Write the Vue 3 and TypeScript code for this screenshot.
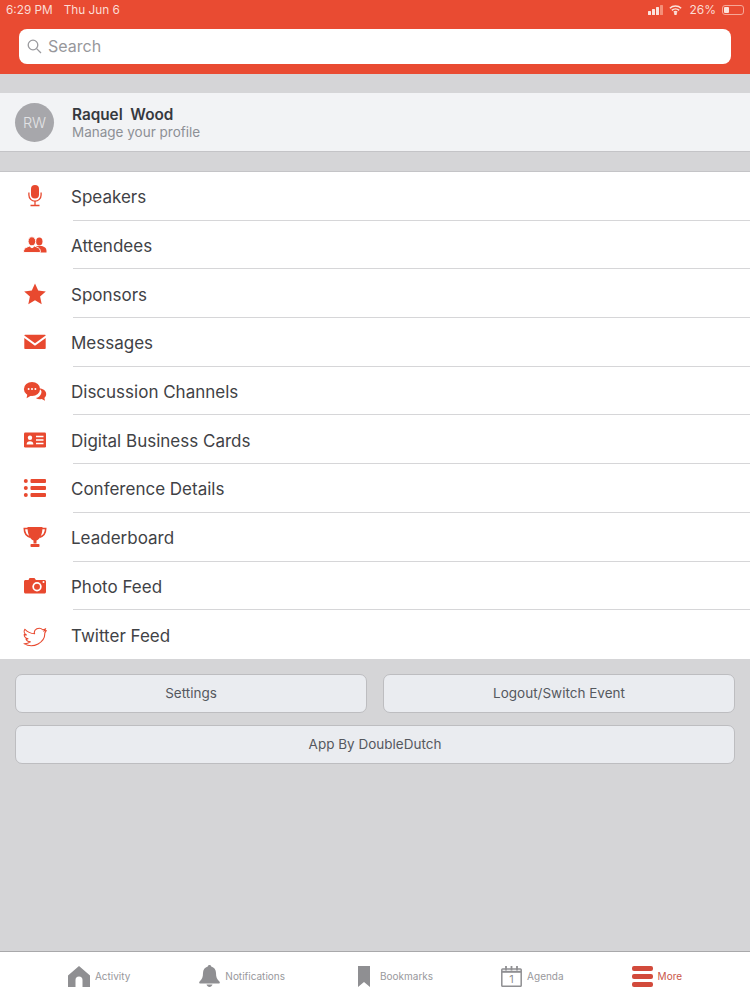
<script setup lang="ts">
const rows = [
  { label: 'Speakers', icon: 'mic' },
  { label: 'Attendees', icon: 'people' },
  { label: 'Sponsors', icon: 'star' },
  { label: 'Messages', icon: 'mail' },
  { label: 'Discussion Channels', icon: 'chat' },
  { label: 'Digital Business Cards', icon: 'card' },
  { label: 'Conference Details', icon: 'list' },
  { label: 'Leaderboard', icon: 'trophy' },
  { label: 'Photo Feed', icon: 'camera' },
  { label: 'Twitter Feed', icon: 'bird' },
]
</script>

<template>
  <div class="page">
    <header class="top">
      <div class="status">
        <span class="time">6:29 PM</span>
        <span class="date">Thu Jun 6</span>
        <span class="status-right">
          <svg class="signal" width="16" height="10" viewBox="0 0 16 10">
            <rect x="0" y="6" width="3" height="4" rx=".5" fill="#fbe3dd" />
            <rect x="4" y="4" width="3" height="6" rx=".5" fill="#fbe3dd" />
            <rect x="8" y="2" width="3" height="8" rx=".5" fill="#fbe3dd" />
            <rect x="12" y="0" width="3" height="10" rx=".5" fill="#f58f78" />
          </svg>
          <svg class="wifi" width="13" height="10" viewBox="0 0 14 11" fill="none" stroke="#fbe3dd" stroke-width="1.7">
            <path d="M.8 3.6a9 9 0 0 1 12.4 0" />
            <path d="M3 5.9a5.8 5.8 0 0 1 8 0" />
            <path d="M5.2 8.1a2.6 2.6 0 0 1 3.6 0" />
            <circle cx="7" cy="9.6" r=".7" fill="#fbe3dd" />
          </svg>
          <span class="pct">26%</span>
          <span class="battery"><i></i></span>
        </span>
      </div>
      <div class="search">
        <svg width="15" height="15" viewBox="0 0 15 15" fill="none" stroke="#9a9a9e" stroke-width="1.3">
          <circle cx="6" cy="6" r="4.8" />
          <path d="M9.6 9.6 14 14" />
        </svg>
        <span class="search-text">Search</span>
      </div>
    </header>

    <section class="profile">
      <div class="avatar">RW</div>
      <div class="who">
        <div class="name">Raquel&nbsp; Wood</div>
        <div class="manage">Manage your profile</div>
      </div>
    </section>

    <ul class="menu">
      <li v-for="row in rows" :key="row.label" class="row">
        <span class="icon">
          <svg width="24" height="24" viewBox="0 0 24 24" fill="#e8492f">
            <g v-if="row.icon === 'mic'">
              <rect x="8" y="1" width="8" height="13.5" rx="4" />
              <path d="M5.900 8.500v2.600a6.100 6.100 0 0 0 12.200 0V8.500" fill="none" stroke="#e8492f" stroke-width="1.300" />
              <path d="M12 17v4M7.500 21.500h9" fill="none" stroke="#e8492f" stroke-width="1.300" />
            </g>
            <g v-else-if="row.icon === 'people'">
              <ellipse cx="16.300" cy="8.500" rx="3.200" ry="3.900" />
              <path d="M13 19.500V13h6l2.200 1c1.700.8 2.500 2.200 2.300 5.500z" />
              <g stroke="#fff" stroke-width=".9">
                <path d="M.6 19.500c-.3-3 1-4.500 3.500-5.400l2.300-1 2.600 1.800 2.600-1.800 2.300 1c2.500.9 3.800 2.400 3.500 5.400z" />
                <ellipse cx="8.900" cy="8.300" rx="3.800" ry="4.500" />
              </g>
            </g>
            <path v-else-if="row.icon === 'star'" d="M12 1.500l3.200 7.100 7.600.8-5.700 5.100 1.600 7.700L12 18.300l-6.700 3.900 1.600-7.700L1.200 9.400l7.600-.8z" />
            <g v-else-if="row.icon === 'mail'">
              <path d="M1.300 5.500c0-.4.300-.7.800-.7h19.800c.5 0 .8.300.8.700L12 13.200z" />
              <path d="M1.300 7.900V18c0 .6.400 1 1 1h19.400c.6 0 1-.4 1-1V7.900L12 15.700z" />
            </g>
            <g v-else-if="row.icon === 'chat'">
              <path d="M16.500 9.500c3.700 0 6.700 2.400 6.700 5.500 0 1.600-.7 2.900-1.800 3.900l.6 2.900-3.300-1.700c-2.200.4-4.300.1-5.900-1 3.600-.9 6-3.600 5.600-7.200z" />
              <ellipse cx="9" cy="10" rx="8.100" ry="6.900" />
              <path d="M4.500 14.500l-.9 4.700 5-3z" />
              <circle cx="5.600" cy="10" r="1" fill="#fff" />
              <circle cx="9" cy="10" r="1" fill="#fff" />
              <circle cx="12.400" cy="10" r="1" fill="#fff" />
            </g>
            <g v-else-if="row.icon === 'card'">
              <rect x="1" y="4.500" width="22" height="15" rx="1.200" />
              <circle cx="7" cy="9.800" r="2.200" fill="#fff" />
              <path d="M3.600 16.500c0-2.200 1.400-3.300 3.400-3.300s3.400 1.100 3.400 3.300z" fill="#fff" />
              <path d="M13 8.500h7.500M13 12h7.500M13 15.500h7.500" fill="none" stroke="#fff" stroke-width="1.300" />
            </g>
            <g v-else-if="row.icon === 'list'">
              <circle cx="2.800" cy="5" r="2" />
              <circle cx="2.800" cy="12" r="2" />
              <circle cx="2.800" cy="19" r="2" />
              <rect x="7.500" y="3" width="15.500" height="4" rx="1" />
              <rect x="7.500" y="10" width="15.500" height="4" rx="1" />
              <rect x="7.500" y="17" width="15.500" height="4" rx="1" />
            </g>
            <g v-else-if="row.icon === 'trophy'">
              <path d="M4.500 2h15c0 6-1.700 11.700-6 13.500v3h-3v-3C6.200 13.700 4.500 8 4.500 2z" />
              <path d="M5 3.500H1.300c0 4.500 2 7.500 6 8.700M19 3.500h3.700c0 4.500-2 7.500-6 8.700" fill="none" stroke="#e8492f" stroke-width="1.600" />
              <rect x="7.500" y="19" width="9" height="3" rx=".8" />
            </g>
            <g v-else-if="row.icon === 'camera'">
              <path d="M2.500 6h3l1-2h5l1.400 2h8.600c.8 0 1.500.7 1.500 1.500v10.500c0 .8-.7 1.500-1.500 1.500h-19C1.700 19.500 1 18.800 1 18V7.500C1 6.700 1.700 6 2.500 6z" />
              <circle cx="14" cy="12.700" r="4.700" fill="#fff" />
              <circle cx="14" cy="12.700" r="3" />
              <circle cx="20.500" cy="8" r="1" fill="#fff" />
            </g>
            <path v-else transform="translate(0 3) scale(1 .9)" d="M23.300 4.900a9.700 9.700 0 0 1-2.700.8 4.800 4.800 0 0 0 2.100-2.700c-.9.600-1.900 1-3 1.200a4.700 4.700 0 0 0-8.100 4.400C7.700 8.400 4.200 6.500 1.900 3.600a4.700 4.700 0 0 0 1.500 6.400 4.700 4.700 0 0 1-2.200-.6v.1a4.800 4.800 0 0 0 3.800 4.700 4.800 4.800 0 0 1-2.100.1 4.800 4.800 0 0 0 4.500 3.300A9.600 9.600 0 0 1 1 19.600a13.500 13.500 0 0 0 20.800-12c.6-.7 1.100-1.600 1.500-2.700z" fill="none" stroke="#e8492f" stroke-width="1.100" stroke-linejoin="round" />
          </svg>
        </span>
        <span class="label">{{ row.label }}</span>
      </li>
    </ul>

    <section class="buttons">
      <button class="btn">Settings</button>
      <button class="btn">Logout/Switch Event</button>
      <button class="btn wide">App By DoubleDutch</button>
    </section>

    <nav class="tabs">
      <div class="tab">
        <svg width="22" height="21" viewBox="0 0 22 21" fill="#8f8f92">
          <path d="M11 0 22 9.500V21h-7.500v-7a2.500 2.500 0 0 0-7 0v7H0V9.500z" />
        </svg>
        <span>Activity</span>
      </div>
      <div class="tab">
        <svg width="21" height="22" viewBox="0 0 21 22" fill="#8f8f92">
          <path d="M10.500 0c1 0 1.600.6 1.700 1.600 3 .8 4.800 3.300 4.800 6.400 0 4 .9 6.300 3.400 8.500.8.800.4 1.900-.7 1.900H1.300c-1.100 0-1.500-1.100-.7-1.900C3.100 14.300 4 12 4 8c0-3.100 1.800-5.600 4.800-6.400C8.900.6 9.500 0 10.500 0z" />
          <path d="M7.500 19.500h6c-.6 1.600-1.600 2.500-3 2.500s-2.400-.9-3-2.500z" />
        </svg>
        <span>Notifications</span>
      </div>
      <div class="tab bookmarks">
        <svg width="12" height="21" viewBox="0 0 12 21" fill="#8f8f92">
          <path d="M0 0h12v21l-6-5-6 5z" />
        </svg>
        <span>Bookmarks</span>
      </div>
      <div class="tab">
        <svg width="21" height="21" viewBox="0 0 21 21" fill="none" stroke="#8f8f92" stroke-width="1.500">
          <rect x=".8" y="3" width="19.400" height="17.300" rx=".8" />
          <path d="M5 0v4.500M10.500 0v4.500M16 0v4.500" stroke-width="1.800" />
          <path d="M1 5.800h19" stroke-width="2" />
          <text x="10.500" y="17" text-anchor="middle" font-size="11" fill="#8f8f92" stroke="none" font-family="Inter, sans-serif">1</text>
        </svg>
        <span>Agenda</span>
      </div>
      <div class="tab active">
        <span class="burger"><i></i><i></i><i></i></span>
        <span>More</span>
      </div>
    </nav>
  </div>
</template>

<style scoped>
.page {
  width: 750px;
  height: 1000px;
  display: flex;
  flex-direction: column;
  background: #d5d5d7;
  font-family: Inter, "Liberation Sans", sans-serif;
  color: #3c3f44;
  overflow: hidden;
}

.top {
  height: 74px;
  box-sizing: border-box;
  background: #e94b32;
  padding: 0 19px;
  flex-shrink: 0;
}

.status {
  height: 29px;
  box-sizing: border-box;
  display: flex;
  align-items: flex-start;
  padding: 3px 0 0;
  margin: 0 -13px;
  font-size: 11.800px;
  line-height: 14px;
  color: #fbdcd4;
}

.date {
  margin-left: 11px;
}

.status-right {
  margin-left: auto;
  display: flex;
  align-items: center;
  height: 14px;
}

.wifi {
  margin-left: 5px;
}

.pct {
  font-size: 12px;
  margin-left: 7px;
}

.battery {
  width: 22px;
  height: 10px;
  box-sizing: border-box;
  border: 1px solid #f6a797;
  border-radius: 3px;
  padding: 1px;
  display: flex;
  margin-left: 6px;
}

.battery i {
  width: 5px;
  background: #fbe3dd;
  border-radius: 1px;
}

.search {
  height: 35px;
  background: #fff;
  border-radius: 8px;
  display: flex;
  align-items: center;
  padding-left: 8px;
  gap: 6px;
  color: #97979b;
  font-size: 16px;
}

.search-text {
  padding-bottom: 2px;
}

.profile {
  margin-top: 19px;
  height: 59px;
  box-sizing: border-box;
  background: #f2f3f5;
  border-bottom: 1px solid #c4c4c7;
  display: flex;
  align-items: center;
  padding: 1px 0 0 15px;
  gap: 18px;
  flex-shrink: 0;
}

.avatar {
  width: 39px;
  height: 39px;
  border-radius: 50%;
  background: #a7a7ab;
  color: #e3e3e5;
  font-size: 14.500px;
  font-weight: 300;
  display: flex;
  align-items: center;
  justify-content: center;
}

.name {
  font-size: 15.300px;
  line-height: 19px;
  font-weight: 600;
  color: #36393e;
}

.manage {
  font-size: 13.500px;
  line-height: 17px;
  color: #8d9096;
}

.menu {
  list-style: none;
  margin: 19px 0 0;
  padding: 0;
  background: #fff;
  border-top: 1px solid #c4c4c7;
  flex-shrink: 0;
}

.row {
  height: 48.700px;
  display: flex;
  align-items: center;
}

.icon {
  width: 24px;
  height: 24px;
  margin: 0 24px 0 23px;
  flex-shrink: 0;
}

.label {
  flex: 1;
  height: 100%;
  box-sizing: border-box;
  padding-top: 2px;
  position: relative;
  display: flex;
  align-items: center;
  font-size: 17px;
  color: #3f4246;
}

.label::after {
  content: "";
  position: absolute;
  left: 2px;
  right: 0;
  bottom: 0;
  height: 1px;
  background: #d6d6d8;
}

.row:last-child .label::after {
  display: none;
}

.buttons {
  padding: 15px;
  display: grid;
  grid-template-columns: 352px 352px;
  column-gap: 16px;
  row-gap: 12px;
}

.btn {
  height: 39px;
  box-sizing: border-box;
  border: 1px solid #bdbdc0;
  border-radius: 7px;
  background: #eaecf0;
  color: #55585e;
  font-family: inherit;
  font-size: 13.500px;
  padding: 0;
}

.wide {
  grid-column: 1 / 3;
}

.tabs {
  margin-top: auto;
  height: 49px;
  box-sizing: border-box;
  background: #fff;
  border-top: 1px solid #a9a9ab;
  display: flex;
  justify-content: center;
  align-items: center;
  gap: 69px;
  flex-shrink: 0;
}

.tab {
  display: flex;
  align-items: center;
  gap: 5px;
  font-size: 10px;
  color: #98989c;
}

.bookmarks {
  gap: 10px;
  margin: 0 -1px 0 4px;
}

.active {
  color: #c9564a;
  margin-left: -1px;
}

.burger {
  width: 21px;
  display: flex;
  flex-direction: column;
  gap: 3px;
}

.burger i {
  height: 5px;
  border-radius: 2px;
  background: #d24a3b;
}
</style>
